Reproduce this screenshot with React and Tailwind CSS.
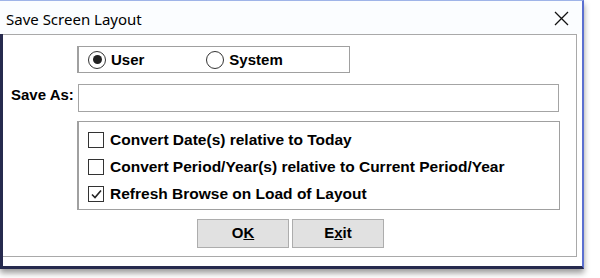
import React from "react";

function Radio({ checked }) {
  return (
    <span className="w-[18px] h-[18px] rounded-full border-[1.5px] border-[#333] bg-white flex items-center justify-center shrink-0">
      {checked && <span className="w-[9px] h-[9px] rounded-full bg-[#222]" />}
    </span>
  );
}

function Check({ checked }) {
  return (
    <span className="w-[16px] h-[16px] border-[1.5px] border-[#333] bg-white flex items-center justify-center shrink-0">
      {checked && (
        <svg width="13" height="13" viewBox="0 0 13 13">
          <path d="M2 6.5 L5 9.5 L11 2.5" fill="none" stroke="#222" strokeWidth="1.6" />
        </svg>
      )}
    </span>
  );
}

export default function App() {
  const bold = { fontFamily: '"Liberation Sans", Arial, sans-serif' };
  return (
    <div className="w-[600px] h-[278px] bg-white overflow-hidden relative">
      <div className="w-[584px] h-[269px] flex flex-col bg-white border-t border-t-[#9fb4e8] border-r-2 border-r-[#5b6fd0] border-b-[3px] border-b-[#262a4e] shadow-[0_4px_6px_rgba(0,0,0,0.4)]">
        {/* title bar */}
        <div className="h-[33px] flex items-center justify-between pl-[6px] pr-[13px] bg-[#fbfdff]">
          <span
            className="text-[15px] text-black leading-none pt-[3px]"
            style={{ fontFamily: '"Noto Sans", "Open Sans", sans-serif' }}
          >
            Save Screen Layout
          </span>
          <svg width="15" height="15" viewBox="0 0 15 15" className="mt-[2px]">
            <path d="M1 1 L14 14 M14 1 L1 14" stroke="#111" strokeWidth="1.3" />
          </svg>
        </div>
        {/* body */}
        <div className="flex-1 flex border-l-[3px] border-l-[#262a4e]">
          <div className="flex-1 flex flex-col pr-[7px] pb-[9px]">
            <div className="w-[574px] h-[223px] border-t border-r border-b border-[#a9a9a9] flex flex-col" style={bold}>
              {/* radio group */}
              <div className="ml-[74px] mt-[11px] w-[273px] h-[27px] border border-[#a0a0a0] border-l-2 flex items-center">
                <div className="ml-[9px] flex items-center gap-[5px]">
                  <Radio checked />
                  <span className="text-[15px] font-bold text-black leading-none">User</span>
                </div>
                <div className="ml-[62px] flex items-center gap-[5px]">
                  <Radio />
                  <span className="text-[15px] font-bold text-black leading-none">System</span>
                </div>
              </div>
              {/* Save As */}
              <div className="mt-[11px] flex items-center h-[28px]">
                <span className="ml-[8px] w-[67px] text-[15px] font-bold text-black leading-none -mt-[8px]">Save As:</span>
                <div className="w-[481px] h-[28px] border border-[#a4a4a4] bg-white" />
              </div>
              {/* checkbox group */}
              <div className="ml-[74px] mt-[9px] w-[483px] h-[89px] border border-[#a0a0a0] border-l-2 flex flex-col pt-[10px] pl-[9px] gap-[11px]">
                <div className="flex items-center gap-[6px] h-[16px]">
                  <Check />
                  <span className="text-[15.5px] font-bold text-black leading-none">Convert Date(s) relative to Today</span>
                </div>
                <div className="flex items-center gap-[6px] h-[16px]">
                  <Check />
                  <span className="text-[15.5px] font-bold text-black leading-none">Convert Period/Year(s) relative to Current Period/Year</span>
                </div>
                <div className="flex items-center gap-[6px] h-[16px]">
                  <Check checked />
                  <span className="text-[15.5px] font-bold text-black leading-none">Refresh Browse on Load of Layout</span>
                </div>
              </div>
              {/* buttons */}
              <div className="mt-[9px] ml-[194px] flex gap-[3px]">
                <button className="w-[92px] h-[29px] bg-[#e1e1e1] border border-[#adadad] text-[15px] font-bold text-black flex items-center justify-center">
                  O<span className="underline">K</span>
                </button>
                <button className="w-[92px] h-[29px] bg-[#e1e1e1] border border-[#adadad] text-[15px] font-bold text-black flex items-center justify-center">
                  E<span className="underline">x</span>it
                </button>
              </div>
            </div>
          </div>
        </div>
      </div>
    </div>
  );
}
